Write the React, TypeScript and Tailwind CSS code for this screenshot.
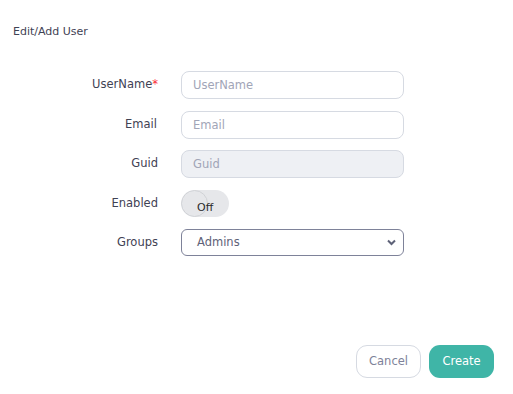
import React from "react";

export default function App() {
  const font = { fontFamily: "'DejaVu Sans', sans-serif" };
  return (
    <div className="w-[513px] h-[394px] bg-white relative text-[#3f4254]" style={font}>
      <div className="pt-[24px] pl-[13px] text-[11px] text-[#3f4254]">Edit/Add User</div>
      <div className="mt-[30px] flex flex-col">
        <div className="flex items-center h-[28px]">
          <label className="w-[158px] text-right text-[11.5px] text-[#3f4254]">
            UserName<span className="text-red-500">*</span>
          </label>
          <input
            placeholder="UserName"
            className="ml-[23px] w-[223px] h-[28px] rounded-[8px] border border-[#d6dae2] px-[11px] text-[11.5px] placeholder:text-[#a1a5b7] outline-none"
            style={font}
          />
        </div>
        <div className="flex items-center h-[28px] mt-[12px]">
          <label className="w-[158px] text-right text-[11.5px] pr-[1px]">Email</label>
          <input
            placeholder="Email"
            className="ml-[23px] w-[223px] h-[28px] rounded-[8px] border border-[#d6dae2] px-[11px] text-[11.5px] placeholder:text-[#a1a5b7] outline-none"
            style={font}
          />
        </div>
        <div className="flex items-center h-[28px] mt-[11px]">
          <label className="w-[158px] text-right text-[11.5px]">Guid</label>
          <input
            placeholder="Guid"
            disabled
            className="ml-[23px] w-[223px] h-[28px] rounded-[8px] border border-[#d6dae2] bg-[#eef0f4] px-[11px] text-[11.5px] placeholder:text-[#a1a5b7] outline-none"
            style={font}
          />
        </div>
        <div className="flex items-center h-[28px] mt-[12px]">
          <label className="w-[158px] text-right text-[11.5px]">Enabled</label>
          <div className="ml-[23px] relative w-[48px] h-[27px] rounded-full bg-[#e6e7ea] overflow-hidden">
            <div className="absolute left-0 top-0 w-[27px] h-[27px] rounded-full border border-[#d0d2d6]"></div>
            <span className="absolute left-[16px] top-[10px] text-[11px] text-[#2b2b2b]">Off</span>
          </div>
        </div>
        <div className="flex items-center h-[28px] mt-[11px]">
          <label className="w-[158px] text-right text-[11.5px]">Groups</label>
          <div className="ml-[23px] relative w-[223px] h-[27px] rounded-[6px] border border-[#7e8299] flex items-center">
            <span className="pl-[15px] text-[11.5px] text-[#5e6278]">Admins</span>
            <svg className="absolute right-[7px] top-[9px]" width="9" height="7" viewBox="0 0 9 7">
              <path d="M1 1.5 L4.5 5 L8 1.5" fill="none" stroke="#5e6278" strokeWidth="2" />
            </svg>
          </div>
        </div>
      </div>
      <div className="absolute left-[356px] top-[345px] flex gap-[8px]">
        <button className="w-[65px] h-[33px] rounded-[11px] border border-[#d6dae2] bg-white text-[11.5px] text-[#7e8299]" style={font}>
          Cancel
        </button>
        <button className="w-[65px] h-[33px] rounded-[11px] bg-[#3fb5a7] text-[11.5px] text-white" style={font}>
          Create
        </button>
      </div>
    </div>
  );
}
